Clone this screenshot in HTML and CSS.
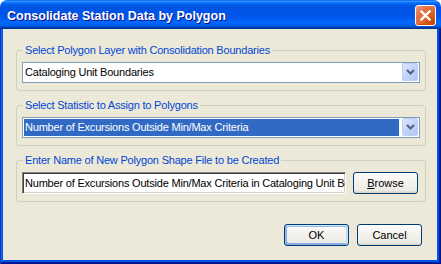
FILE: index.html
```html
<!DOCTYPE html>
<html lang="en">
<head>
  <meta charset="UTF-8">
  <title>Consolidate Station Data by Polygon</title>
  <link rel="stylesheet" href="styles.css">
</head>
<body>
  <div class="window">
    <div class="titlebar">
      <span class="title">Consolidate Station Data by Polygon</span>
      <button class="close" aria-label="Close">
        <svg width="11" height="11" viewBox="0 0 11 11">
          <path d="M1.5 1.5 L9.5 9.5 M9.5 1.5 L1.5 9.5" stroke="#fff" stroke-width="2.4" stroke-linecap="square"/>
        </svg>
      </button>
    </div>

    <div class="frame">
      <div class="client">
        <fieldset class="group">
          <legend>Select Polygon Layer with Consolidation Boundaries</legend>
          <div class="combo">
            <span class="combo-text">Cataloging Unit Boundaries</span>
            <span class="drop">
              <svg width="9" height="6" viewBox="0 0 9 6">
                <path d="M1 1 L4.5 4.5 L8 1" fill="none" stroke="#4d6185" stroke-width="2"/>
              </svg>
            </span>
          </div>
        </fieldset>

        <fieldset class="group">
          <legend>Select Statistic to Assign to Polygons</legend>
          <div class="combo">
            <span class="combo-text selected">Number of Excursions Outside Min/Max Criteria</span>
            <span class="drop">
              <svg width="9" height="6" viewBox="0 0 9 6">
                <path d="M1 1 L4.5 4.5 L8 1" fill="none" stroke="#4d6185" stroke-width="2"/>
              </svg>
            </span>
          </div>
        </fieldset>

        <fieldset class="group">
          <legend>Enter Name of New Polygon Shape File to be Created</legend>
          <div class="file-row">
            <div class="textbox">Number of Excursions Outside Min/Max Criteria in Cataloging Unit Boundaries</div>
            <button class="btn browse"><u>B</u>rowse</button>
          </div>
        </fieldset>

        <div class="actions">
          <button class="btn default">OK</button>
          <button class="btn">Cancel</button>
        </div>
      </div>
    </div>
  </div>
</body>
</html>
```

FILE: styles.css
```css
html, body {
  margin: 0;
  background: #fff;
}
.window {
  width: 441px;
  height: 264px;
  display: flex;
  flex-direction: column;
  border-radius: 7px 7px 0 0;
  overflow: hidden;
}
.titlebar {
  height: 29px;
  box-sizing: border-box;
  padding: 2px 5px 0 7px;
  display: flex;
  align-items: center;
  justify-content: space-between;
  background: linear-gradient(to bottom, #0058ee 0%, #3593ff 4%, #288eff 6%, #127dff 8%, #036ffc 10%, #0262ee 14%, #0057e5 20%, #0054e3 24%, #0055eb 56%, #005bf5 66%, #026afe 76%, #0062ef 86%, #0052d6 92%, #0040ab 94%, #003092 100%);
}
.title {
  font: bold 12.5px "Liberation Sans", Arial, sans-serif;
  color: #fff;
  text-shadow: 1px 1px #0f1089;
}
.close {
  width: 21px;
  height: 21px;
  padding: 0;
  border: 1px solid #fff;
  border-radius: 3px;
  display: flex;
  align-items: center;
  justify-content: center;
  background: radial-gradient(circle at 85% 85%, #cc4600 0%, #dc6527 40%, #e5734a 70%, #f0a08a 100%);
  box-shadow: inset 0 -1px 1px #da4600;
}
.frame {
  flex: 1;
  display: flex;
  min-width: 0;
  padding: 0 4px 4px 3px;
  background: #0054e3;
  box-shadow: inset 1px 0 #0831d9, inset -1px -1px #00138c, inset -2px -2px #001ea0, inset 2px 0 #166aee;
}
.client {
  flex: 1;
  min-width: 0;
  background: #ece9d8;
  padding: 15px 11px 0 13px;
  font: 11px "Liberation Sans", Arial, sans-serif;
  letter-spacing: -0.2px;
  color: #000;
}
.group {
  min-width: 0;
  margin: 8px 0 0;
  padding: 5px 5px 7px;
  border: 1px solid #d0d0bf;
  border-radius: 3px;
}
.group:first-child {
  margin-top: 0;
}
.group legend {
  color: #0046d5;
  line-height: 13px;
  padding: 0 2px;
  margin-left: 1px;
}
.combo {
  height: 21px;
  box-sizing: border-box;
  border: 1px solid #7f9db9;
  background: #fff;
  display: flex;
}
.combo-text {
  flex: 1;
  min-width: 0;
  margin: 1px 0 1px 1px;
  padding-left: 1px;
  line-height: 17px;
  white-space: nowrap;
  overflow: hidden;
}
.combo-text.selected {
  background: #316ac5;
  color: #fff;
}
.drop {
  width: 16px;
  flex: none;
  margin: 0 1px 1px 3px;
  box-sizing: border-box;
  border: 1px solid #bccdf6;
  border-radius: 2px;
  background: linear-gradient(135deg, #dde7fd 0%, #c3d4fa 50%, #b2c6f4 100%);
  display: flex;
  align-items: center;
  justify-content: center;
}
.file-row {
  display: flex;
  gap: 7px;
  margin-right: 2px;
}
.textbox {
  flex: 1;
  min-width: 0;
  height: 22px;
  box-sizing: border-box;
  padding-left: 2px;
  line-height: 20px;
  background: #fff;
  border: 1px solid;
  border-color: #808080 #fff #fff #808080;
  box-shadow: inset 1px 1px 0 #404040, inset -1px -1px 0 #d4d0c8;
  white-space: nowrap;
  overflow: hidden;
}
.btn {
  width: 65px;
  height: 22px;
  flex: none;
  padding: 0;
  font: 11px "Liberation Sans", Arial, sans-serif;
  color: #000;
  border: 1px solid #003c74;
  border-radius: 3px;
  background: linear-gradient(180deg, #fff 0%, #f4f3ee 40%, #ecebe6 86%, #d6d0c5 100%);
}
.btn.default {
  box-shadow: inset -1px 1px #cee7ff, inset 1px 2px #98b8ea, inset -2px 2px #bcd4f6, inset 1px -1px #89ade4, inset 2px -2px #89ade4;
}
.actions {
  display: flex;
  justify-content: flex-end;
  gap: 8px;
  margin: 22px 4px 0 0;
}
```
